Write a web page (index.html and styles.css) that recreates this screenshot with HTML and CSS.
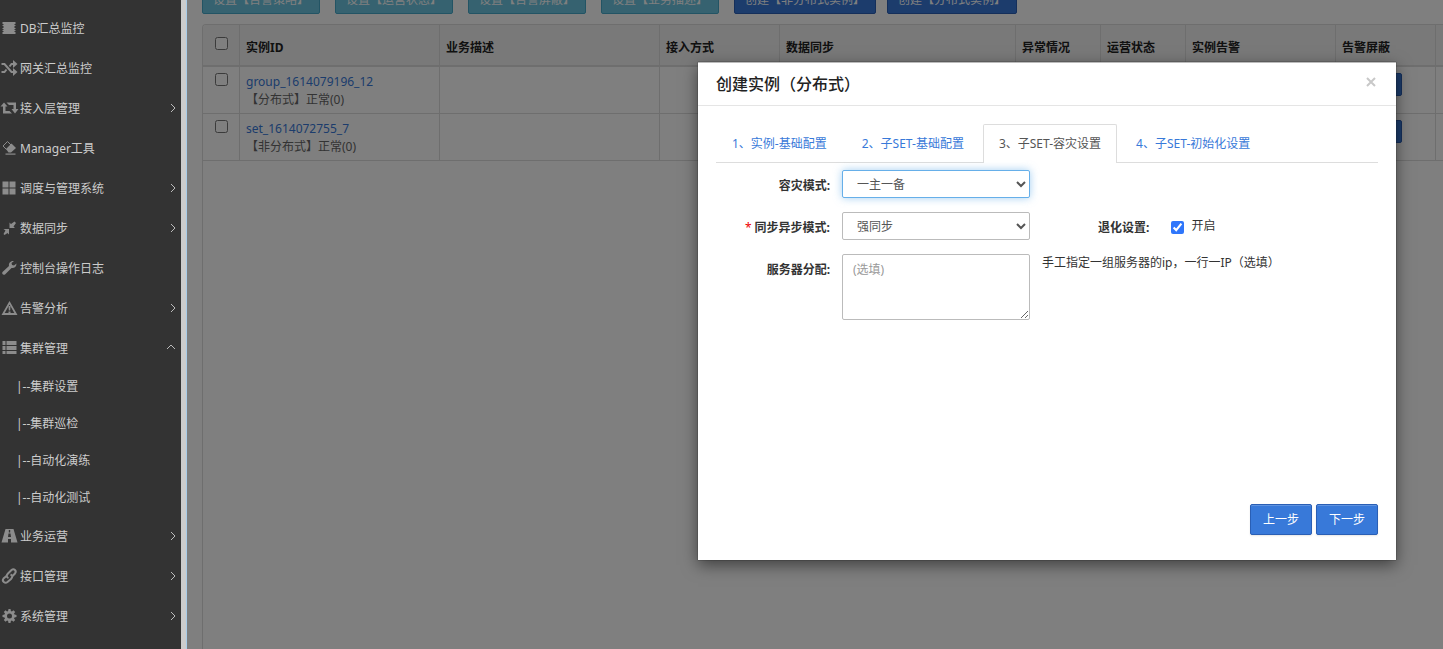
FILE: index.html
```
<!DOCTYPE html>
<html lang="zh-CN">
<head>
<meta charset="utf-8">
<title>集群管理</title>
<link rel="stylesheet" href="styles.css">
</head>
<body>
<div class="app">
  <nav class="sidebar">
    <ul class="menu">
      <li><a class="item" href="#"><svg class="icon" viewBox="0 0 16 16"><path d="M2 2h13v2h-1v1h1v1h-1v2h1v1h-1v1h1v1h-1v1h1v2H2v-2h1v-1H2v-1h1V9H2V8h1V6H2V5h1V4H2z"/></svg>DB汇总监控</a></li>
      <li><a class="item" href="#"><svg class="icon" viewBox="0 0 16 16"><path class="line" d="M1 4h3l7 8h2M1 12h3l2-2.500M9 6.500L11 4h2"/><path d="M12.500 0l4.500 4-4.500 4zM12.500 8l4.500 4-4.500 4z"/></svg>网关汇总监控</a></li>
      <li><a class="item" href="#"><svg class="icon" viewBox="0 0 16 16"><path d="M3.500 2.500L7 6.500H5V11h4l2.500 2.500H2.500v-7H0zM6 2.500h9.500V9H18l-3.500 4.500L11 9h2V5H8.500z"/></svg>接入层管理<svg class="chev" viewBox="0 0 6 10"><path d="M1 1l4 4-4 4"/></svg></a></li>
      <li><a class="item" href="#"><svg class="icon" viewBox="0 0 16 16"><path d="M5.500 9L11 3.500l4.500 4.500-5 4.500H8z"/><path class="thin" d="M6 9.500L2.500 6 7 1.500l4.500 4.500"/><path d="M5 13.500h10v1.200H5z"/></svg>Manager工具</a></li>
      <li><a class="item" href="#"><svg class="icon" viewBox="0 0 16 16"><path d="M2 1.500h6v6H2zM9 1.500h6v6H9zM2 8.500h6v6H2zM9 8.500h6v6H9z"/></svg>调度与管理系统<svg class="chev" viewBox="0 0 6 10"><path d="M1 1l4 4-4 4"/></svg></a></li>
      <li><a class="item" href="#"><svg class="icon" viewBox="0 0 16 16"><path d="M9 2.500V8h5.500L13 6.500l2.500-3.500L14 1.500 10.500 4zM3 9h5.500v5.500L7 13l-3 2-1-1 2-3.500z"/></svg>数据同步<svg class="chev" viewBox="0 0 6 10"><path d="M1 1l4 4-4 4"/></svg></a></li>
      <li><a class="item" href="#"><svg class="icon" viewBox="0 0 16 16"><path d="M2 12l6.500-6c-.5-3 1.500-5.500 5-5l-2.500 2 .5 2 2 .5L16 3.500c0 3.500-2.500 5-5 4.500l-6.500 6.500c-2 1-3.500-1-2.500-2.500z"/></svg>控制台操作日志</a></li>
      <li><a class="item" href="#"><svg class="icon" viewBox="0 0 16 16"><path fill-rule="evenodd" d="M9 1l8 14H1zM9 4.500L4.200 13h9.600z"/><path d="M8 6h2l-.3 4.500H8.300zM8 11.500h2V13H8z"/></svg>告警分析<svg class="chev" viewBox="0 0 6 10"><path d="M1 1l4 4-4 4"/></svg></a></li>
      <li><a class="item" href="#"><svg class="icon" viewBox="0 0 16 16"><path d="M2 1h3v4H2zM6 1h10v4H6zM2 6h3v4H2zM6 6h10v4H6zM2 11h3v3H2zM6 11h10v3H6z"/></svg>集群管理<svg class="chev up" viewBox="0 0 10 6"><path d="M1 5l4-4 4 4"/></svg></a>
        <ul class="sub">
          <li><a class="leaf" href="#">|--集群设置</a></li>
          <li><a class="leaf" href="#">|--集群巡检</a></li>
          <li><a class="leaf" href="#">|--自动化演练</a></li>
          <li><a class="leaf" href="#">|--自动化测试</a></li>
        </ul>
      </li>
      <li><a class="item" href="#"><svg class="icon" viewBox="0 0 16 16"><path fill-rule="evenodd" d="M5 1h8l4 13.500h-6.500V11h-3v3.500H1zM8.300 2v2.500h1.400V2zM8 5.500L7.500 9h3L10 5.500z"/></svg>业务运营<svg class="chev" viewBox="0 0 6 10"><path d="M1 1l4 4-4 4"/></svg></a></li>
      <li><a class="item" href="#"><svg class="icon" viewBox="0 0 16 16"><g class="round"><path d="M8 10C5.500 9 6 7 7.500 5.500L11 2c2.500-2 5.500 1 3.500 3.500L12 8"/><path d="M10 6.500c2.500 1 2 3 .5 4.500L7 14c-2.500 2-6-1-4-3.500L6 8"/></g></svg>接口管理<svg class="chev" viewBox="0 0 6 10"><path d="M1 1l4 4-4 4"/></svg></a></li>
      <li><a class="item" href="#"><svg class="icon" viewBox="0 0 16 16"><path fill-rule="evenodd" d="M8 1h2l.4 2 1 .5L13 2.300 14.700 4l-1.200 1.600.5 1 2 .4v2l-2 .4-.5 1 1.200 1.600-1.700 1.700-1.600-1.200-1 .5L10 15H8l-.4-2-1-.5L5 13.700 3.300 12l1.200-1.600-.5-1L2 9V7l2-.4.5-1L3.300 4 5 2.300l1.600 1.200 1-.5zM9 5.500a2.500 2.500 0 1 0 0 5 2.500 2.500 0 0 0 0-5z"/></svg>系统管理<svg class="chev" viewBox="0 0 6 10"><path d="M1 1l4 4-4 4"/></svg></a></li>
    </ul>
  </nav>
  <div class="splitter"></div>
  <main class="main">
    <div class="toolbar">
      <button class="btn info" type="button">设置【告警策略】</button>
      <button class="btn info" type="button">设置【运营状态】</button>
      <button class="btn info" type="button">设置【告警屏蔽】</button>
      <button class="btn info" type="button">设置【业务描述】</button>
      <button class="btn primary" type="button">创建【非分布式实例】</button>
      <button class="btn primary" type="button">创建【分布式实例】</button>
    </div>
    <div class="panel">
      <table class="grid">
        <colgroup><col class="c-check"><col class="c-id"><col class="c-desc"><col class="c-access"><col class="c-sync"><col class="c-state"><col class="c-state"><col class="c-alarm"><col class="c-mask"><col class="c-rest"></colgroup>
        <thead>
          <tr><th class="pick"><input type="checkbox" aria-label="全选"></th><th>实例ID</th><th>业务描述</th><th>接入方式</th><th>数据同步</th><th>异常情况</th><th>运营状态</th><th>实例告警</th><th>告警屏蔽</th><th></th></tr>
        </thead>
        <tbody>
          <tr><td class="pick"><input type="checkbox" aria-label="group_1614079196_12"></td><td><a href="#">group_1614079196_12</a><br>【分布式】正常(0)</td><td></td><td></td><td></td><td></td><td></td><td></td><td><button class="btn primary small" type="button">设置</button></td><td></td></tr>
          <tr><td class="pick"><input type="checkbox" aria-label="set_1614072755_7"></td><td><a href="#">set_1614072755_7</a><br>【非分布式】正常(0)</td><td></td><td></td><td></td><td></td><td></td><td></td><td><button class="btn primary small" type="button">设置</button></td><td></td></tr>
        </tbody>
      </table>
    </div>
    <div class="backdrop"></div>
    <section class="modal" role="dialog" aria-labelledby="dialog-title">
      <header class="modal-head">
        <h1 id="dialog-title">创建实例（分布式）</h1>
        <button class="close" type="button" aria-label="关闭"><svg viewBox="0 0 10 10"><path d="M1 1l8 8M9 1L1 9"/></svg></button>
      </header>
      <div class="modal-body">
        <div class="tabs">
          <a class="tab" href="#">1、实例-基础配置</a>
          <a class="tab" href="#">2、子SET-基础配置</a>
          <a class="tab active" href="#">3、子SET-容灾设置</a>
          <a class="tab" href="#">4、子SET-初始化设置</a>
        </div>
        <form class="form">
          <label class="label" for="mode">容灾模式:</label>
          <select class="field focused" id="mode"><option>一主一备</option></select>
          <label class="label start" for="sync"><span class="req">*</span> 同步异步模式:</label>
          <select class="field" id="sync"><option>强同步</option></select>
          <div class="degrade">
            <span class="label">退化设置:</span>
            <label class="check"><input type="checkbox" checked><span>开启</span></label>
          </div>
          <label class="label start" for="servers">服务器分配:</label>
          <textarea class="field area" id="servers" placeholder="(选填)"></textarea>
          <p class="hint">手工指定一组服务器的ip，一行一IP（选填）</p>
        </form>
      </div>
      <footer class="modal-foot">
        <button class="btn primary step" type="button">上一步</button>
        <button class="btn primary step" type="button">下一步</button>
      </footer>
    </section>
  </main>
</div>
</body>
</html>
```
FILE: styles.css
```
* { box-sizing: border-box; }
body, input, select, textarea, button {
  font-family: "Noto Sans", "Noto Sans CJK SC", sans-serif;
  font-size: 12px;
}
body { margin: 0; color: #333; line-height: 18px; }
a { text-decoration: none; color: #3879d9; }
ul { list-style: none; margin: 0; padding: 0; }

.app { display: grid; grid-template-columns: 181px 6px minmax(0, 1fr); height: 100vh; overflow: hidden; }

.sidebar { background: #333; overflow: hidden; }
.menu { padding-top: 8px; }
.item { display: flex; align-items: center; gap: 3px; height: 40px; padding-top: 1px; padding-right: 5px; color: #ccc; white-space: nowrap; }
.icon { width: 17px; height: 16px; margin-bottom: 2px; flex: none; fill: #8c8c8c; overflow: visible; }
.line, .thin, .round path { fill: none; stroke: #8c8c8c; stroke-width: 2; }
.thin { stroke-width: 1; }
.chev { width: 6px; height: 10px; margin-left: auto; margin-bottom: 2px; fill: none; stroke: #bbb; stroke-width: 1; }
.chev.up { width: 10px; height: 6px; margin-bottom: 4px; }
.leaf { display: flex; align-items: center; height: 37px; padding-left: 16px; color: #ccc; }

.splitter { background: #ccc; border-right: 1px solid #a9cdea; }

.main { position: relative; overflow: hidden; display: flex; flex-direction: column; padding-left: 15px; background: #fff; }
.toolbar { display: flex; align-items: flex-end; height: 14px; overflow: hidden; flex: none; }
.btn { border: 1px solid #2a5fb5; border-radius: 2px; color: #fff; background: #3879d9; height: 31px; padding: 0 11px; flex: none; white-space: nowrap; line-height: 18px; }
.btn.info { background: #6cc5e0; border-color: #46a9c8; margin-right: 15px; }
.toolbar .primary { margin-right: 11px; }
.toolbar .btn { padding: 2px 10px 0; }

.panel { flex: 1; margin-top: 10px; border: 1px solid #ddd; border-width: 1px 0 0 1px; border-radius: 4px 0 0 0; overflow: hidden; }
.grid { table-layout: fixed; width: 1400px; border-collapse: separate; border-spacing: 0; }
.c-check { width: 37px; }
.c-id { width: 200px; }
.c-desc { width: 220px; }
.c-access { width: 120px; }
.c-sync { width: 236px; }
.c-state { width: 85px; }
.c-alarm { width: 150px; }
.c-mask { width: 100px; }
.grid th, .grid td { border-right: 1px solid #ddd; border-bottom: 1px solid #ddd; text-align: left; vertical-align: top; padding: 6px 6px 4px; color: #666; line-height: 18px; }
.grid th { height: 42px; border-bottom-width: 2px; background: #f2f2f2; color: #222; padding-top: 14px; }
.grid .pick { text-align: center; padding: 6px 0; line-height: 13px; }
.grid th.pick { padding-top: 12px; }
.pick input { margin: 0; width: 13px; height: 13px; }
.btn.small { width: 60px; height: 23px; padding: 0; display: block; }

.backdrop { position: absolute; inset: 0; background: rgba(0, 0, 0, .5); }
.modal { position: absolute; top: 62px; right: 47px; width: 698px; min-height: 498px; display: flex; flex-direction: column; background: #fff; border-top: 1px solid #bbb; box-shadow: 0 5px 15px rgba(0, 0, 0, .5), 0 0 1px #222; }
.modal-head { display: flex; justify-content: space-between; align-items: center; padding: 0 20px 0 18px; height: 43px; border-bottom: 1px solid #e5e5e5; }
h1 { margin: 0; font-size: 16px; line-height: 22px; font-weight: 500; color: #222; }
.close { border: 0; padding: 0; margin-bottom: 4px; background: none; width: 10px; height: 10px; display: flex; }
.close svg { width: 10px; height: 10px; fill: none; stroke: #c8c8c8; stroke-width: 2; }
.modal-body { flex: 1; padding: 18px 18px 0; }
.tabs { display: flex; gap: 3px; border-bottom: 1px solid #ddd; }
.tab { height: 38px; padding: 10px 15px; border: 1px solid transparent; border-bottom: 0; white-space: nowrap; }
.tab.active { height: 39px; margin-bottom: -1px; color: #555; background: #fff; border-color: #ddd; border-radius: 2px 2px 0 0; }

.form { display: grid; grid-template-columns: 114px 188px minmax(0, 1fr); column-gap: 12px; row-gap: 14px; padding-top: 7px; align-items: start; }
.label { font-weight: bold; text-align: right; padding-top: 7px; white-space: nowrap; }
.label.start { grid-column: 1; }
.req { color: #e00; font-weight: normal; }
.field { width: 100%; height: 28px; border: 1px solid #bbb; border-radius: 2px; background: #fff; color: #555; padding: 0 10px; margin: 0; display: block; line-height: 18px; }
.focused { border-color: #66afe9; box-shadow: 0 0 8px rgba(102, 175, 233, .6); }
.area { height: 66px; padding: 6px 10px; resize: both; }
.area::placeholder { color: #999; }
.degrade { display: flex; gap: 22px; padding-left: 56px; }
.check { display: flex; gap: 7px; padding-top: 5px; }
.check input { margin: 4px 0 0; width: 13px; height: 13px; accent-color: #2f76fb; }
.hint { margin: 0; }
.modal-foot { display: flex; justify-content: flex-end; gap: 4px; padding: 0 18px 25px; }
.step { padding: 0 12px; box-shadow: inset 0 1px 0 rgba(255, 255, 255, .2), 0 1px 2px rgba(0, 0, 0, .1); }
```
